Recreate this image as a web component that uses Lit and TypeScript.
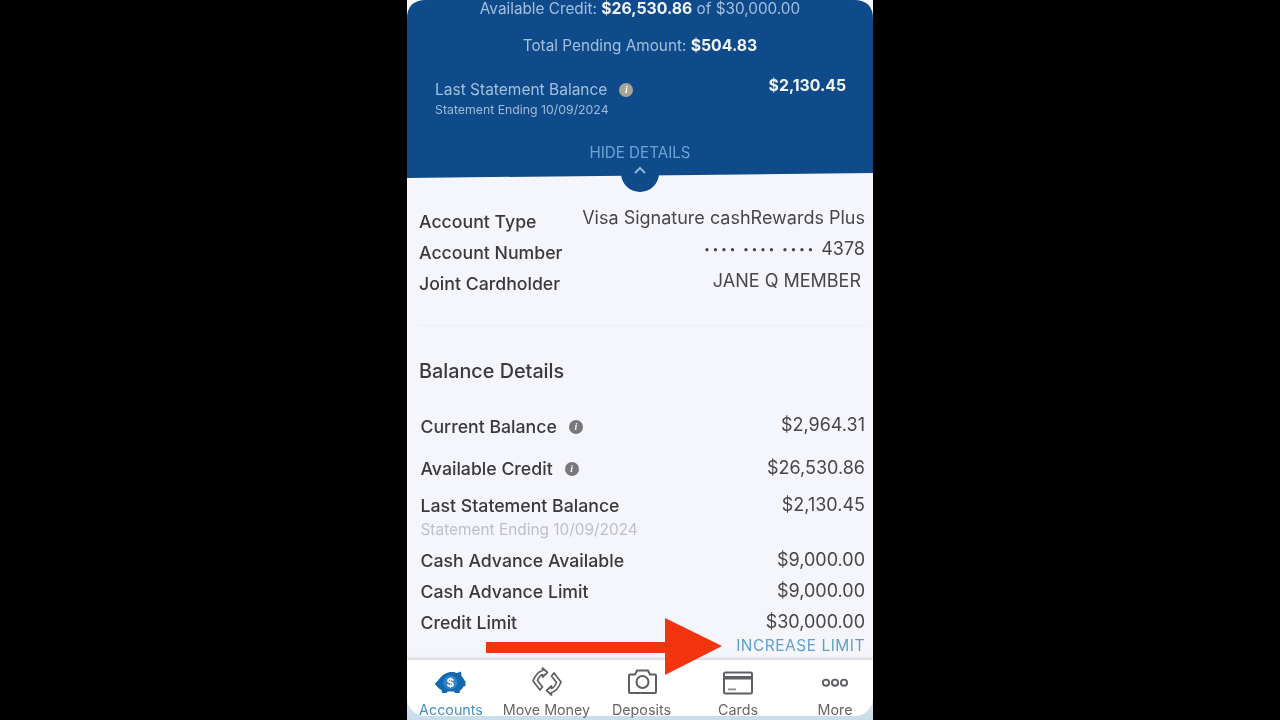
import { LitElement, css, html, svg } from 'lit'
import { customElement } from 'lit/decorators.js'

interface Row {
  label: string
  value: any
  lift: number
  height: number
  inset?: number
  info?: boolean
  sub?: string
}

const mask = html`<span class="mask">••••</span> <span class="mask">••••</span> <span class="mask">••••</span> 4378`

const accountRows: Row[] = [
  { label: 'Account Type', value: 'Visa Signature cashRewards Plus', lift: 4, height: 31 },
  { label: 'Account Number', value: mask, lift: 4, height: 31 },
  { label: 'Joint Cardholder', value: 'JANE Q MEMBER', lift: 3, height: 31, inset: 4 }
]

const balanceRows: Row[] = [
  { label: 'Current Balance', value: '$2,964.31', lift: 2, height: 42, info: true },
  { label: 'Available Credit', value: '$26,530.86', lift: 1, height: 37, info: true },
  { label: 'Last Statement Balance', value: '$2,130.45', lift: 1, height: 55, sub: 'Statement Ending 10/09/2024' },
  { label: 'Cash Advance Available', value: '$9,000.00', lift: 1, height: 31 },
  { label: 'Cash Advance Limit', value: '$9,000.00', lift: 1, height: 31 },
  { label: 'Credit Limit', value: '$30,000.00', lift: 1, height: 25 }
]

const navIcons = {
  accounts: svg`<path fill="#1468b0" d="M4 17.500c1.500-1 2.500-3 4-4.500 3-3.500 7-6 12-6 2 0 3.500.500 5 1l4-1.500.500 4.500c1.500 1.500 2.500 3 3 4.500l1 .500v5l-2 .500c-1 2-2 3-3.500 4l-.500 2.500h-4.500l-1-1.500h-6.500l-1 1.500h-4.500l-.500-3c-2-1-4-2.500-5-4-1-1.500-2-2.500-1-3z"/>
    <circle cx="18.500" cy="17.500" r="7" fill="#2f83c8"/>
    <text x="18.500" y="22" text-anchor="middle" fill="#fff" font-size="12" font-weight="700" font-family="Inter, sans-serif">$</text>`,
  move: svg`<g fill="none" stroke="#5f5f63" stroke-width="1.700" stroke-linejoin="round">
    <path d="M14.500 3l5 4.500-5 4.500v-2.500q-2.500 .500-5 6l5 6.500-2.500 3-7-9q3.500-9 9.500-10.500z"/>
    <path d="M14.500 3l5 4.500-5 4.500v-2.500q-2.500 .500-5 6l5 6.500-2.500 3-7-9q3.500-9 9.500-10.500z" transform="rotate(180 19 16.500)"/></g>`,
  deposits: svg`<path fill="none" stroke="#5f5f63" stroke-width="2" stroke-linejoin="round" d="M7 9.500h5l2-4h11l2 4h5a1 1 0 0 1 1 1v16.500a1 1 0 0 1-1 1H7a1 1 0 0 1-1-1V10.500a1 1 0 0 1 1-1z"/>
    <circle cx="19.500" cy="17" r="6" fill="none" stroke="#5f5f63" stroke-width="2"/>`,
  cards: svg`<rect x="5" y="7.500" width="28" height="21" rx="1.500" fill="none" stroke="#5f5f63" stroke-width="2"/>
    <rect x="5" y="11" width="28" height="3.500" fill="#5f5f63"/><rect x="9" y="23.500" width="8" height="1.800" fill="#8e8e92"/>`,
  more: svg`<g fill="none" stroke="#5f5f63" stroke-width="1.900"><circle cx="10" cy="17.700" r="3.100"/><circle cx="19" cy="17.700" r="3.100"/><circle cx="28" cy="17.700" r="3.100"/></g>`
}

@customElement('app-root')
export class AppRoot extends LitElement {
  static styles = css`
    :host {
      display: block;
      width: 1280px;
      height: 720px;
      background: #000;
      font-family: Inter, 'Liberation Sans', sans-serif;
      overflow: hidden;
    }

    .screen {
      position: relative;
      width: 466px;
      height: 720px;
      margin: 0 auto;
      display: flex;
      flex-direction: column;
      background: linear-gradient(#f5f6fb 92%, #c6dde9);
      overflow: hidden;
      filter: blur(0.6px);
    }

    .summary {
      height: 179px;
      flex: none;
      background: #0f4a8a;
      clip-path: path('M0 19 Q0 0 19 0 H447 Q466 0 466 19 V173 L0 178 Z');
      color: #a3c0dc;
      font-size: 15.300px;
      display: flex;
      flex-direction: column;
      align-items: center;
      box-sizing: border-box;
    }

    .summary b {
      color: #f0f4f9;
      font-weight: 700;
      font-size: 15.800px;
    }

    .credit {
      height: 18px;
      line-height: 18px;
      margin-bottom: 19px;
      white-space: nowrap;
    }

    .pending {
      height: 18px;
      line-height: 18px;
      margin-bottom: 23px;
    }

    .statement {
      align-self: stretch;
      display: flex;
      justify-content: space-between;
      padding: 0 27px 0 28px;
      height: 68px;
    }

    .statement-label {
      display: flex;
      align-items: center;
      gap: 12px;
      height: 23px;
      font-size: 15.500px;
    }

    .statement small {
      display: block;
      font-size: 12.300px;
      line-height: 18px;
      color: #9dbbd8;
    }

    .statement b {
      line-height: 16px;
    }

    .hide {
      color: #6ea3d6;
      font-size: 15.200px;
      line-height: 18px;
      margin-top: -2px;
    }

    .notch {
      position: absolute;
      left: 214px;
      top: 160px;
      width: 38px;
      height: 32px;
      background: #0f4a8a;
      border-radius: 0 0 19px 19px;
      display: flex;
      justify-content: center;
      padding-top: 6px;
      box-sizing: border-box;
    }

    .content {
      flex: 1;
      display: flex;
      flex-direction: column;
      padding: 31px 8px 0 12px;
      color: #39393d;
    }

    .balance {
      display: flex;
      flex-direction: column;
      padding-left: 1.500px;
    }

    .row {
      display: flex;
      justify-content: space-between;
      align-items: flex-start;
      font-size: 17.700px;
      line-height: 24px;
    }

    .label {
      display: flex;
      align-items: center;
      gap: 12px;
      font-weight: 500;
      white-space: nowrap;
    }

    .value {
      color: #47474b;
      font-size: 18px;
      white-space: nowrap;
    }

    .mask {
      font-size: 10.500px;
      letter-spacing: 2.600px;
      vertical-align: 2px;
    }

    .sub {
      font-size: 15.400px;
      line-height: 20px;
      color: #bfc0c6;
      margin-top: 2px;
      white-space: nowrap;
    }

    .info {
      width: 14px;
      height: 14px;
      border-radius: 50%;
      background: #77777c;
      color: #f5f6fb;
      font: italic 700 10px/14px 'Liberation Serif', serif;
      text-align: center;
      flex: none;
    }

    .statement .info {
      background: #a9a595;
      color: #fff;
    }

    hr {
      border: 0;
      border-top: 1px solid #eeeff4;
      margin: 22px 0 32px;
      width: 100%;
    }

    h2 {
      margin: 0 0 31px;
      font-size: 19.800px;
      line-height: 26px;
      font-weight: 500;
      color: #3a3a3e;
    }

    .increase {
      align-self: flex-end;
      color: #5f9fca;
      font-size: 15.500px;
      line-height: 20px;
      letter-spacing: 0.500px;
    }

    .nav {
      height: 56px;
      flex: none;
      margin-bottom: 4px;
      display: grid;
      grid-template-columns: 88px 103px 87px 106px 82px;
      background: #fff;
      border-radius: 0 0 18px 18px;
      box-shadow: 0 -2px 3px rgba(0, 0, 0, 0.12);
    }

    .tab {
      display: flex;
      flex-direction: column;
      align-items: center;
      color: #66666a;
      font-size: 14.300px;
      line-height: 16px;
      white-space: nowrap;
    }

    .tab:last-child {
      padding-left: 6px;
    }

    .tab svg {
      width: 38px;
      height: 34px;
      margin: 5px 0 3px;
      flex: none;
    }

    .tab.active {
      color: #4a90c0;
    }

    .arrow {
      position: absolute;
      left: 79px;
      top: 617px;
    }
  `

  renderRow (row: Row): any {
    return html`
      <div class="row" style="height:${row.height}px">
        <div>
          <div class="label">${row.label}${row.info === true ? html`<span class="info">i</span>` : ''}</div>
          ${row.sub !== undefined ? html`<div class="sub">${row.sub}</div>` : ''}
        </div>
        <div class="value" style="margin:${-row.lift}px ${row.inset ?? 0}px 0 0">${row.value}</div>
      </div>
    `
  }

  renderTab (label: string, icon: any, active = false): any {
    return html`
      <div class="tab ${active ? 'active' : ''}">
        <svg viewBox="0 0 38 34">${icon}</svg>
        <span>${label}</span>
      </div>
    `
  }

  render (): any {
    return html`
      <div class="screen">
        <div class="summary">
          <div class="credit">Available Credit: <b>$26,530.86</b> of $30,000.00</div>
          <div class="pending">Total Pending Amount: <b>$504.83</b></div>
          <div class="statement">
            <div>
              <div class="statement-label">Last Statement Balance <span class="info">i</span></div>
              <small>Statement Ending 10/09/2024</small>
            </div>
            <b>$2,130.45</b>
          </div>
          <div class="hide">HIDE DETAILS</div>
        </div>
        <div class="notch">
          <svg width="14" height="8" viewBox="0 0 14 8"><path d="M2 7l5-5 5 5" fill="none" stroke="#8fb4d8" stroke-width="2"/></svg>
        </div>
        <div class="content">
          ${accountRows.map((row) => this.renderRow(row))}
          <hr />
          <h2>Balance Details</h2>
          <div class="balance">
            ${balanceRows.map((row) => this.renderRow(row))}
          </div>
          <div class="increase">INCREASE LIMIT</div>
        </div>
        <div class="nav">
          ${this.renderTab('Accounts', navIcons.accounts, true)}
          ${this.renderTab('Move Money', navIcons.move)}
          ${this.renderTab('Deposits', navIcons.deposits)}
          ${this.renderTab('Cards', navIcons.cards)}
          ${this.renderTab('More', navIcons.more)}
        </div>
        <svg class="arrow" width="240" height="60" viewBox="0 0 240 60">
          <path fill="#f4330f" d="M0 25h179V1l57 28-57 29V36H0z"/>
        </svg>
      </div>
    `
  }
}
